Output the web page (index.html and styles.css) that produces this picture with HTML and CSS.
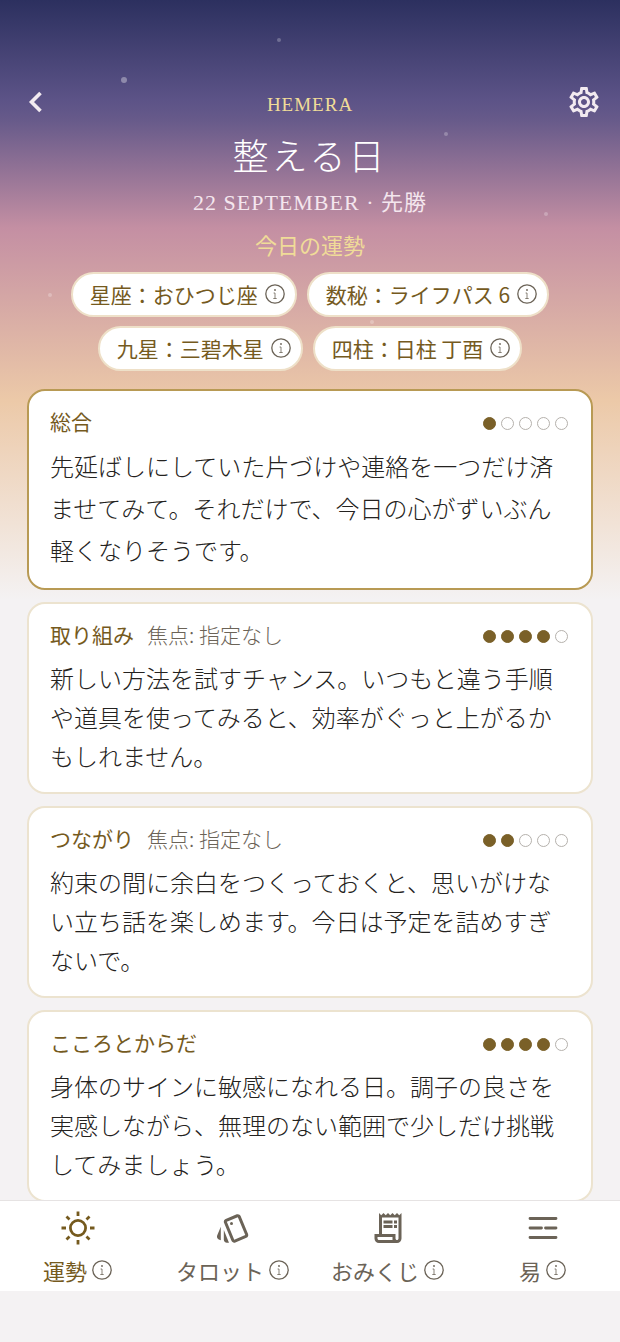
FILE: index.html
```html
<!DOCTYPE html>
<html lang="ja">
<head>
    <meta charset="UTF-8">
    <meta name="viewport" content="width=device-width, initial-scale=1.0">
    <title>HEMERA</title>
    <link rel="stylesheet" href="styles.css">
</head>
<body>
    <svg class="sprite" aria-hidden="true">
        <symbol id="info" viewBox="0 0 20 20">
            <circle cx="10" cy="10" r="9.2" fill="none" stroke="currentColor" stroke-width="1.3"/>
            <circle cx="10" cy="6" r="0.9" fill="currentColor"/>
            <path d="M8.600 9H10v5.500M8.300 14.500h3.400" fill="none" stroke="currentColor" stroke-width="0.800"/>
        </symbol>
    </svg>
    <div class="app">
        <main class="screen">
            <i class="star star-big s1"></i>
            <i class="star s2"></i>
            <i class="star s3"></i>
            <i class="star s4"></i>
            <i class="star s5"></i>
            <i class="star s6"></i>

            <header class="top">
                <button class="icon-btn" aria-label="戻る">
                    <svg width="36" height="36" viewBox="0 0 36 36"><path d="M22.500 9L13.500 18l9 9" fill="none" stroke="currentColor" stroke-width="3.600"/></svg>
                </button>
                <div class="heading">
                    <p class="brand">HEMERA</p>
                    <h1>整える日</h1>
                    <p class="date">22 SEPTEMBER · <span>先勝</span></p>
                    <h2>今日の運勢</h2>
                </div>
                <button class="icon-btn" aria-label="設定">
                    <svg width="36" height="36" viewBox="0 0 24 24" fill="currentColor"><path d="M19.430 12.980c.04-.32.07-.64.07-.98 0-.34-.03-.66-.07-.98l2.110-1.650c.19-.15.24-.42.12-.64l-2-3.460c-.09-.16-.26-.25-.44-.25-.06 0-.12.01-.17.03l-2.490 1c-.52-.4-1.080-.73-1.690-.98l-.38-2.650C14.460 2.180 14.250 2 14 2h-4c-.25 0-.46.18-.49.42l-.38 2.650c-.61.25-1.170.59-1.690.98l-2.490-1c-.06-.02-.12-.03-.18-.03-.17 0-.34.09-.43.25l-2 3.460c-.13.22-.07.49.12.64l2.110 1.650c-.04.32-.07.65-.07.98 0 .33.03.66.07.98l-2.110 1.650c-.19.15-.24.42-.12.64l2 3.460c.09.16.26.25.44.25.06 0 .12-.01.17-.03l2.490-1c.52.4 1.080.73 1.690.98l.38 2.650c.03.24.24.42.49.42h4c.25 0 .46-.18.49-.42l.38-2.650c.61-.25 1.170-.59 1.690-.98l2.490 1c.06.02.12.03.18.03.17 0 .34-.09.43-.25l2-3.460c.12-.22.07-.49-.12-.64l-2.110-1.650zm-1.980-1.710c.04.31.05.52.05.73 0 .21-.02.43-.05.73l-.14 1.130.89.7 1.080.84-.7 1.210-1.270-.51-1.040-.42-.9.68c-.43.32-.84.56-1.250.73l-1.060.43-.16 1.130-.2 1.350h-1.400l-.19-1.350-.16-1.130-1.060-.43c-.43-.18-.83-.41-1.230-.71l-.91-.7-1.060.43-1.270.51-.7-1.210 1.080-.84.89-.7-.14-1.130c-.03-.31-.05-.54-.05-.74s.02-.43.05-.73l.14-1.130-.89-.7-1.080-.84.7-1.210 1.270.51 1.040.42.9-.68c.43-.32.84-.56 1.250-.73l1.060-.43.16-1.130.2-1.350h1.390l.19 1.350.16 1.130 1.060.43c.43.18.83.41 1.230.71l.91.7 1.060-.43 1.270-.51.7 1.210-1.070.85-.89.7.14 1.130zM12 8c-2.210 0-4 1.790-4 4s1.790 4 4 4 4-1.790 4-4-1.790-4-4-4zm0 6c-1.100 0-2-.9-2-2s.9-2 2-2 2 .9 2 2-.9 2-2 2z"/></svg>
                </button>
            </header>

            <div class="chips">
                <button class="chip">星座：おひつじ座 <svg class="info"><use href="#info"/></svg></button>
                <button class="chip">数秘：ライフパス 6 <svg class="info"><use href="#info"/></svg></button>
                <button class="chip">九星：三碧木星 <svg class="info"><use href="#info"/></svg></button>
                <button class="chip">四柱：日柱 丁酉 <svg class="info"><use href="#info"/></svg></button>
            </div>

            <section class="cards">
                <article class="card main-card">
                    <div class="card-head">
                        <h3>総合</h3>
                        <div class="dots" role="img" aria-label="1 / 5"><i class="on"></i><i></i><i></i><i></i><i></i></div>
                    </div>
                    <p>先延ばしにしていた片づけや連絡を一つだけ済ませてみて。それだけで、今日の心がずいぶん軽くなりそうです。</p>
                </article>
                <article class="card">
                    <div class="card-head">
                        <h3>取り組み</h3><span class="focus">焦点: 指定なし</span>
                        <div class="dots" role="img" aria-label="4 / 5"><i class="on"></i><i class="on"></i><i class="on"></i><i class="on"></i><i></i></div>
                    </div>
                    <p>新しい方法を試すチャンス。いつもと違う手順や道具を使ってみると、効率がぐっと上がるかもしれません。</p>
                </article>
                <article class="card">
                    <div class="card-head">
                        <h3>つながり</h3><span class="focus">焦点: 指定なし</span>
                        <div class="dots" role="img" aria-label="2 / 5"><i class="on"></i><i class="on"></i><i></i><i></i><i></i></div>
                    </div>
                    <p>約束の間に余白をつくっておくと、思いがけない立ち話を楽しめます。今日は予定を詰めすぎないで。</p>
                </article>
                <article class="card">
                    <div class="card-head">
                        <h3>こころとからだ</h3>
                        <div class="dots" role="img" aria-label="4 / 5"><i class="on"></i><i class="on"></i><i class="on"></i><i class="on"></i><i></i></div>
                    </div>
                    <p>身体のサインに敏感になれる日。調子の良さを実感しながら、無理のない範囲で少しだけ挑戦してみましょう。</p>
                </article>
            </section>
        </main>

        <nav class="tabs">
            <a href="#fortune" class="tab active">
                <svg class="tab-icon" viewBox="0 0 36 36" fill="none" stroke="currentColor" stroke-width="2.800"><circle cx="18" cy="18" r="7.600"/><path d="M18 1.500v4.500M18 30v4.500M1.500 18H6M30 18h4.500M6.500 6.500l3 3M26.500 26.500l3 3M6.500 29.500l3-3M26.500 9.500l3-3"/></svg>
                <span>運勢 <svg class="info"><use href="#info"/></svg></span>
            </a>
            <a href="#tarot" class="tab">
                <svg class="tab-icon" viewBox="0 0 24 24" fill="currentColor"><path d="M2.530 19.650l1.340.56v-9.030l-2.430 5.860c-.41 1.020.08 2.190 1.090 2.610zm19.500-3.700L17.070 3.980c-.31-.75-1.040-1.210-1.810-1.230-.26 0-.53.04-.79.15L7.100 5.950c-.75.31-1.210 1.030-1.230 1.800-.01.27.04.54.15.8l4.960 11.970c.31.76 1.050 1.220 1.830 1.230.26 0 .52-.05.77-.15l7.360-3.050c1.020-.42 1.510-1.590 1.090-2.600zm-9.200 3.800L7.870 7.790l7.350-3.040h.01l4.950 11.950-7.350 3.050z"/><circle cx="11" cy="9" r="1"/><path d="M5.880 19.750c0 1.100.9 2 2 2h1.450l-3.450-8.340v6.340z"/></svg>
                <span>タロット <svg class="info"><use href="#info"/></svg></span>
            </a>
            <a href="#omikuji" class="tab">
                <svg class="tab-icon" viewBox="0 0 24 24" fill="currentColor"><path d="M19.500 3.500L18 2l-1.500 1.500L15 2l-1.500 1.500L12 2l-1.500 1.500L9 2 7.500 3.500 6 2v14H3v3c0 1.660 1.340 3 3 3h12c1.660 0 3-1.340 3-3V2l-1.500 1.500zM15 20H6c-.55 0-1-.45-1-1v-1h10v2zm4-1c0 .55-.45 1-1 1s-1-.45-1-1v-3H8V5h11v14z"/><path d="M9 7h6v2H9zM16 7h2v2h-2zM9 10h6v2H9zM16 10h2v2h-2z"/></svg>
                <span>おみくじ <svg class="info"><use href="#info"/></svg></span>
            </a>
            <a href="#eki" class="tab">
                <svg class="tab-icon" viewBox="0 0 36 36" fill="none" stroke="currentColor" stroke-width="2.800" stroke-linecap="round"><path d="M5 8.500h26M5 18h11.500M20.500 18H31M5 27.500h26"/></svg>
                <span>易 <svg class="info"><use href="#info"/></svg></span>
            </a>
        </nav>
    </div>
</body>
</html>
```
FILE: styles.css
```css
* {
    box-sizing: border-box;
}
body {
    margin: 0;
    background: #f4f2f3;
    color: #242220;
    font-family: "Noto Sans CJK JP", sans-serif;
}
h1, h2, h3, p {
    margin: 0;
    font-weight: 400;
}
button {
    font: inherit;
    border: none;
    background: none;
    padding: 0;
    cursor: pointer;
}
svg {
    display: block;
}
.sprite {
    position: absolute;
    width: 0;
    height: 0;
}
.app {
    display: flex;
    flex-direction: column;
    height: 100vh;
    padding-bottom: 51px;
}
.screen {
    position: relative;
    flex: 1;
    min-height: 0;
    overflow: hidden;
    padding: 84px 27px 0;
    background: linear-gradient(#2c305f 0, #5c5387 100px, #675a8a 120px, #c48fa3 228px, #ecc9a8 400px, #f4f2f3 600px);
}

/* stars */
.star {
    position: absolute;
    width: 4px;
    height: 4px;
    margin-left: -2px;
    border-radius: 50%;
    background: #fff;
    opacity: 0.25;
}
.star-big {
    width: 6px;
    height: 6px;
    margin-left: -3px;
    opacity: 0.35;
}
.s1 { left: 20%; top: 77px; }
.s2 { left: 45%; top: 38px; }
.s3 { left: 72%; top: 132px; }
.s4 { left: 88%; top: 212px; }
.s5 { left: 8%; top: 293px; }
.s6 { left: 60%; top: 320px; }

/* header */
.top {
    display: flex;
    justify-content: space-between;
    align-items: flex-start;
    margin: 0 -9px;
}
.icon-btn {
    width: 36px;
    height: 36px;
    display: grid;
    place-items: center;
    color: #f2eaf0;
}
.heading {
    text-align: center;
    font-family: "Liberation Serif", "Noto Sans CJK JP", serif;
}
.brand {
    padding-top: 9px;
    font-size: 19px;
    line-height: 24px;
    letter-spacing: 1px;
    color: #f0dc98;
}
h1 {
    margin-top: 15px;
    font-size: 36px;
    line-height: 52px;
    font-weight: 300;
    letter-spacing: 3px;
    color: #fff;
}
.date {
    margin-top: 3px;
    font-size: 22px;
    line-height: 32px;
    letter-spacing: 1px;
    color: #f4e6ee;
}
h2 {
    margin-top: 10px;
    font-size: 22px;
    line-height: 36px;
    color: #f0dc98;
}

/* chips */
.chips {
    display: flex;
    flex-wrap: wrap;
    justify-content: center;
    gap: 9px 10px;
    margin-top: 7px;
}
.chip {
    display: flex;
    align-items: center;
    gap: 7px;
    height: 45px;
    padding: 0 10px 1px 17px;
    border: 2px solid #eee0c8;
    border-radius: 23px;
    background: #fff;
    color: #755a1e;
    font-size: 21px;
}
.info {
    flex: none;
    width: 20px;
    height: 20px;
    color: #6b6357;
}

/* cards */
.cards {
    display: flex;
    flex-direction: column;
    gap: 12px;
    margin-top: 18px;
}
.card {
    padding: 12px 21px 17px;
    border: 2px solid #ece3cf;
    border-radius: 18px;
    background: #fff;
}
.main-card {
    border-color: #b89a54;
}
.card-head {
    display: flex;
    align-items: center;
    gap: 13px;
    height: 36px;
    margin-bottom: 6px;
}
h3 {
    font-size: 21px;
    line-height: 36px;
    color: #755a1e;
}
.focus {
    font-size: 21px;
    line-height: 36px;
    font-weight: 300;
    color: #6b6357;
}
.dots {
    display: flex;
    gap: 5px;
    margin: 5px 2px 0 auto;
}
.dots i {
    width: 13px;
    height: 13px;
    border: 1px solid #b5b1ac;
    border-radius: 50%;
}
.dots .on {
    background: #7a6028;
    border-color: #7a6028;
}
.card p {
    font-size: 24px;
    line-height: 39px;
    font-weight: 300;
}
.main-card p {
    line-height: 42px;
}

/* bottom tabs */
.tabs {
    display: grid;
    grid-template-columns: repeat(4, 1fr);
    border-top: 1px solid #e6e3e3;
    background: #fff;
}
.tab {
    display: flex;
    flex-direction: column;
    align-items: center;
    padding-top: 9px;
    height: 90px;
    color: #6b6357;
    font-size: 22px;
    line-height: 34px;
    text-decoration: none;
}
.tab.active {
    color: #755a1e;
}
.tab-icon {
    width: 36px;
    height: 36px;
    margin-bottom: 7px;
}
.tab span {
    display: flex;
    align-items: center;
    gap: 5px;
}
```
